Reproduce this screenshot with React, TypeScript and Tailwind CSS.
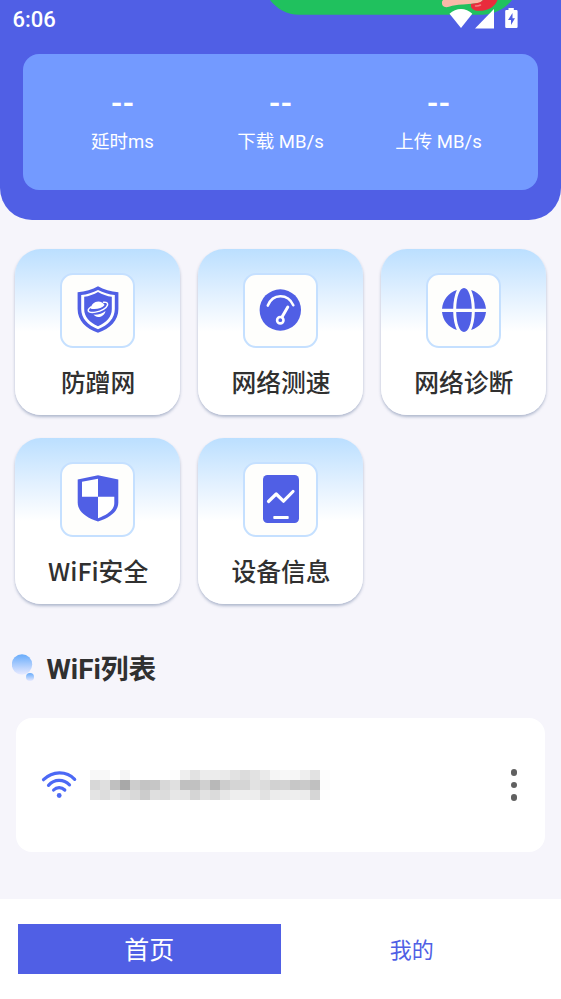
import type { ReactNode } from 'react';

const stats = [
  { value: '--', label: '延时ms' },
  { value: '--', label: '下载 MB/s' },
  { value: '--', label: '上传 MB/s' },
];

// Gray levels of the masked network name, one string per row
const maskRows = [
  'f8 f8 ff f5 ff ff ff ff fd ee e2 ec ec ea e2 dc e2 ea f5 f8 f6 ee e2 fd',
  'd7 df c0 a8 cd c4 c6 d8 e0 c0 c1 d0 b8 cd d5 d5 e2 dc d2 d3 c7 ca c0 fc',
  'e4 dd e7 df d9 cc df dc e7 e5 d5 e2 db e7 ee ee ed e2 ec ed ee ec d6 fe',
].map((row) => row.split(' '));

function ShieldPlanetIcon() {
  return (
    <svg width="42" height="47" viewBox="0 0 42 47" fill="none">
      <path d="M21 .3C15.5 3.6 8 5.6 .6 6.2V23c0 11.6 8.4 19.5 20.400 23.800C33 42.500 41.400 34.600 41.400 23V6.200C34 5.600 26.500 3.600 21 .3Z" fill="#505fe5" />
      <path d="M21 3.900C16 6.600 10 8.400 4.200 9V23c0 9.300 6.500 16.200 16.800 20.200C31.300 39.200 37.800 32.300 37.800 23V9C32 8.400 26 6.600 21 3.900Z" fill="#fff" />
      <path d="M21 6C16.800 8.500 12 10.200 7.200 10.800V23c0 8 5.400 13.600 13.800 17.200C29.400 36.600 34.800 31 34.800 23V10.800C30 10.200 25.200 8.500 21 6Z" fill="#505fe5" />
      <path d="M13.800 22.700c.3-4.400 3.600-7.300 7.500-7.300 2.800 0 5 1.200 6.300 3.500-2.400 3.200-8.200 4.900-13.800 3.800ZM16.500 28.600c4.700.3 9.200-1.200 12-3.600-.8 4.300-4.200 6-7.300 6-1.900 0-3.500-.8-4.700-2.400Z" fill="#fff" />
      <path d="M14.100 20.800c-3.200 2-3.700 4.100-1.900 5 2.800 1.400 9.600.3 14.200-2.500 4.500-2.700 5.400-6 2.600-6.900-.7-.2-1.600-.3-2.500-.2" stroke="#fff" strokeWidth="1.500" strokeLinecap="round" />
    </svg>
  );
}

function GaugeIcon() {
  return (
    <svg width="42" height="42" viewBox="0 0 42 42" fill="none">
      <circle cx="21.300" cy="21" r="20.700" fill="#505fe5" />
      <path d="M8.800 16.600C13.800 4.300 28.800 4.300 34.300 16.200" stroke="#fff" strokeWidth="2.600" strokeLinecap="round" />
      <circle cx="21.300" cy="31.200" r="3.200" stroke="#fff" strokeWidth="2.600" />
      <path d="M23 28 28.800 18" stroke="#fff" strokeWidth="3" strokeLinecap="round" />
    </svg>
  );
}

function GlobeIcon() {
  return (
    <svg className="ml-[2px]" width="44" height="44" viewBox="0 0 44 44" fill="none">
      <path d="M14.800 2C6 5 1 12 0 20.700h11.200C11.400 13.500 12.500 7.300 14.800 2ZM29.200 2C38 5 43 12 44 20.700H32.800C32.600 13.500 31.500 7.300 29.200 2ZM14.800 42C6 39 1 32.500 0 24h11.200c.2 7 1.300 13 3.600 18ZM29.200 42C38 39 43 32.500 44 24H32.800c-.2 7-1.300 13-3.600 18Z" fill="#505fe5" />
      <path d="M14.200 20.700C14.500 9 17.500 0 22 0s7.500 9 7.800 20.700ZM14.200 24C14.500 35.500 17.500 44 22 44s7.500-8.500 7.800-20Z" fill="#505fe5" />
    </svg>
  );
}

function ShieldCheckerIcon() {
  return (
    <svg width="42" height="47" viewBox="0 0 42 47">
      <path d="M21 .3 41.300 4.600v22.900c0 8.500-7.800 15-20.300 19C8.500 42.500.7 36 .7 27.500V4.600Z" fill="#505fe5" />
      <path d="M21 3.800v18H5V6.800ZM21 21.800h16.300v6.500c0 6.200-6.500 11.300-16.300 15Z" fill="#fff" />
    </svg>
  );
}

function DeviceIcon() {
  return (
    <svg className="ml-[1px]" width="36" height="48" viewBox="0 0 36 48" fill="none">
      <rect width="36" height="48" rx="4.500" fill="#505fe5" />
      <path d="m5.500 26.500 7.700-7.500 7.300 7.200L30 16.500" stroke="#fff" strokeWidth="3.200" strokeLinecap="round" strokeLinejoin="round" />
      <rect x="10.300" y="41" width="15.400" height="3" rx=".8" fill="#fff" />
    </svg>
  );
}

const features: { label: string; icon: ReactNode }[] = [
  { label: '防蹭网', icon: <ShieldPlanetIcon /> },
  { label: '网络测速', icon: <GaugeIcon /> },
  { label: '网络诊断', icon: <GlobeIcon /> },
  { label: 'WiFi安全', icon: <ShieldCheckerIcon /> },
  { label: '设备信息', icon: <DeviceIcon /> },
];

function StatusBar() {
  return (
    <div className="relative h-[54px]">
      <svg className="absolute top-0 left-[264px]" width="252" height="20" viewBox="264 0 252 20">
        <path d="M270 0C277 9 287 14.800 299 14.800H482C494 14.800 505 9 512 0Z" fill="#20c15e" />
        <path d="M442 1.500C441.500 6 444 8 449 6.800C454 5.500 457 4.500 463 4.600L480 3 483 0H443Z" fill="#f9b9a8" />
        <path d="M471 4C470 9 474 11.500 482 10.700C490 10 495.500 5.500 497.500 0H483C480 3.500 475 3 471 4Z" fill="#e92c3c" />
        <path d="M475.500 6C477.500 6.200 479 5.800 480.500 5" stroke="#f77b81" strokeWidth="1.500" fill="none" strokeLinecap="round" />
      </svg>
      <div className="relative flex justify-between pl-[12.500px]">
        <span className="mt-[6px] font-['Roboto',sans-serif] text-[22px] leading-[27px] font-medium text-white">6:06</span>
        <svg className="mr-[41px]" width="72" height="32" viewBox="448 0 72 32">
          <path d="M449.500 13.800C456 7.500 466 7.500 472.300 13.800L461 28Z" fill="#fff" />
          <path d="M494 9v19.500H475Z" fill="#fff" />
          <path d="M508.500 8h5.300v2h2.600q1.200 0 1.200 1.200v15.600q0 1.200-1.200 1.200h-10q-1.200 0-1.200-1.200V11.200q0-1.200 1.200-1.200h2.100Z" fill="#fff" />
          <path d="m512.500 13-4.500 7h3v5l4-6.700h-2.500Z" fill="#505fe5" />
        </svg>
      </div>
    </div>
  );
}

function WifiIcon() {
  return (
    <svg className="-mt-[2px]" width="36" height="28" viewBox="0 0 36 28" fill="none" stroke="#4c69f5" strokeWidth="3.200" strokeLinecap="round">
      <path d="M2.500 9.700C11.500.6 25.500.6 33.700 9.300" />
      <path d="M7.500 15.300C13.500 8.900 22.500 8.900 28.500 14.900" />
      <path d="M12.600 20C15.700 16.700 20.500 16.700 23.800 20" />
      <circle cx="18.200" cy="25.500" r="2.400" fill="#4c69f5" stroke="none" />
    </svg>
  );
}

export default function App() {
  return (
    <div className="flex h-[999px] w-[561px] flex-col overflow-hidden bg-[#f6f5fb] font-['Roboto','Noto_Sans_CJK_SC',sans-serif] text-[#303030]">
      {/* Header */}
      <header className="h-[219.500px] shrink-0 rounded-b-[32px] bg-[#505fe5]">
        <StatusBar />
        <div className="mx-[23px] grid h-[136px] grid-cols-3 rounded-2xl bg-[#739aff] px-[20.500px] pt-[32px] text-center text-white">
          {stats.map((s) => (
            <div key={s.label}>
              <div className="text-[30px] leading-[34px] font-bold">{s.value}</div>
              <div className="mt-[8px] text-[18.500px] leading-[28px]">{s.label}</div>
            </div>
          ))}
        </div>
      </header>

      {/* Feature grid */}
      <main className="grow px-[15px] pt-[29.500px]">
        <div className="grid grid-cols-3 gap-x-[17.500px] gap-y-[23px]">
          {features.map((f) => (
            <div
              key={f.label}
              className="flex h-[166px] flex-col items-center rounded-[26px] bg-linear-to-b from-[#bbdfff] via-[#e3f1ff] via-28% to-white to-50% pt-[23.500px] shadow-[0_2px_3px_rgba(90,110,150,0.45)]"
            >
              <div className="flex size-[75px] items-center justify-center rounded-[13px] border-2 border-[#c5e0ff] bg-[#fefefc] pb-[1px]">
                {f.icon}
              </div>
              <div className="mt-[15px] ml-[1px] font-['Noto_Sans_CJK_SC',sans-serif] text-[24.800px] leading-[36px] font-medium">{f.label}</div>
            </div>
          ))}
        </div>

        {/* WiFi list */}
        <div className="mt-[45px] -ml-[3px] flex h-[38px] items-center">
          <svg width="24" height="28" viewBox="0 0 24 28">
            <defs>
              <linearGradient id="bubble" x1="0" y1="0" x2="0" y2="1">
                <stop offset="0" stopColor="#68acfb" />
                <stop offset="1" stopColor="#e8eaff" />
              </linearGradient>
            </defs>
            <circle cx="10" cy="10.500" r="10.200" fill="url(#bubble)" />
            <circle cx="18" cy="23" r="4" fill="url(#bubble)" />
          </svg>
          <h2 className="mt-[4px] ml-[10.500px] text-[27.800px] leading-[38px] font-bold">WiFi列表</h2>
        </div>
        <div className="mt-[31px] mr-[1px] ml-[1px] flex h-[134px] items-center rounded-2xl bg-white pl-[25px] pr-[28px]">
          <WifiIcon />
          <svg className="ml-[13px]" width="240" height="30" shapeRendering="crispEdges">
            {maskRows.map((row, y) =>
              row.map((c, x) => (
                <rect key={`${x}-${y}`} x={x * 10} y={y * 10} width="10" height="10" fill={`#${c}${c}${c}`} />
              )),
            )}
          </svg>
          <div className="ml-auto flex flex-col gap-[6px]">
            <i className="size-[6.500px] rounded-full bg-[#606060]" />
            <i className="size-[6.500px] rounded-full bg-[#606060]" />
            <i className="size-[6.500px] rounded-full bg-[#606060]" />
          </div>
        </div>
      </main>

      {/* Bottom tabs */}
      <nav className="grid h-[100px] shrink-0 grid-cols-2 bg-white px-[18px] pt-[25px] text-center">
        <button className="h-[50px] bg-[#505fe5] pt-[3px] text-[25px] text-white">首页</button>
        <button className="h-[50px] pt-[3px] text-[22px] text-[#505fe5]">我的</button>
      </nav>
    </div>
  );
}
